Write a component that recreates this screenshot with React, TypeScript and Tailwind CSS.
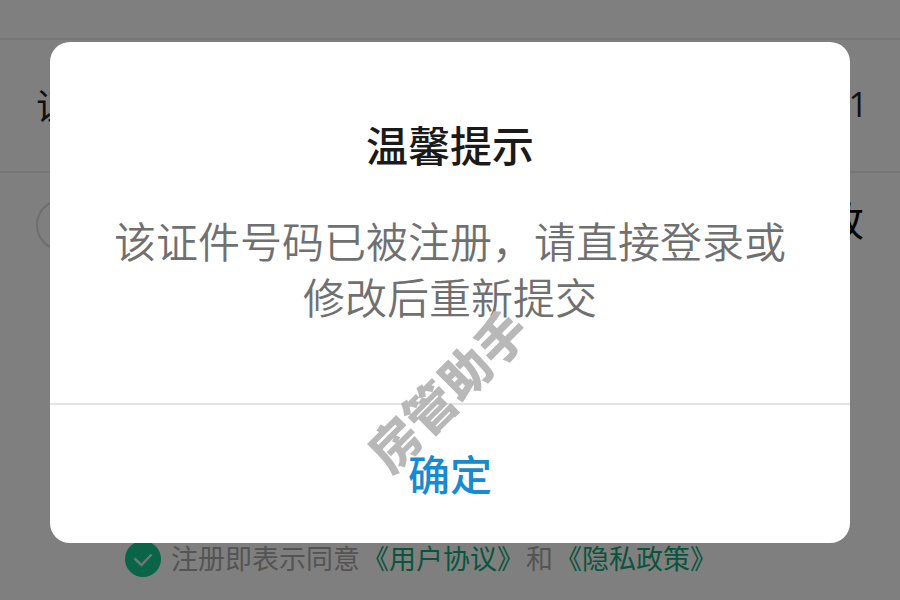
import {useState} from "react";

const cjk = "font-['Noto_Sans_CJK_SC',sans-serif]";

const RegisterForm = () => (
    <div className="flex min-h-screen flex-col bg-white">
        <div className="h-10 border-b-2 border-[#ececec]"/>
        <div className="flex h-[133px] items-center justify-between border-b-2 border-[#ececec] pr-8 pb-1 pl-9 text-[#222]">
            <span className="text-4xl">证</span>
            <span className="font-['Open_Sans',sans-serif] text-[34px] leading-none">51</span>
        </div>
        <div className="flex h-26 items-center justify-between px-9">
            <input
                type="radio"
                aria-label="选择"
                className="size-13 appearance-none rounded-full border-2 border-[#dcdcdc]"
            />
            <button type="button" className="pb-3 text-[40px] leading-none text-black">改</button>
        </div>
        <div className="mt-auto flex items-center gap-2.5 px-[125px] pb-[22px] text-[27px] leading-9 text-[#a8a8a8]">
            <span className="relative size-9 shrink-0">
                <input
                    id="agree"
                    type="checkbox"
                    defaultChecked
                    className="block size-9 appearance-none rounded-full bg-[#14c88e]"
                />
                <svg viewBox="0 0 36 36" className="pointer-events-none absolute inset-0" fill="none">
                    <path d="M9.5 17.5l7 6.5 10-10.5" stroke="#d8efe6" strokeWidth="2.4"/>
                </svg>
            </span>
            <p className="pb-0.5 whitespace-nowrap">
                <label htmlFor="agree">注册即表示同意</label>
                <a href="#terms" className="ml-0.5 text-[#12a87a]">《用户协议》</a>
                <span className="mx-0.5">和</span>
                <a href="#privacy" className="text-[#12a87a]">《隐私政策》</a>
            </p>
        </div>
    </div>
);

const Watermark = () => (
    <div
        aria-hidden="true"
        className="pointer-events-none absolute inset-x-0 top-[320px] pb-3 text-center text-[50px] leading-none font-black text-[#b8b8b8] -rotate-45"
    >
        房管助手
    </div>
);

const TipDialog = ({onConfirm}: {onConfirm: () => void}) => (
    <div className="absolute inset-0 flex items-start bg-black/50 px-[50px] pt-[42px]">
        <div
            role="dialog"
            aria-modal="true"
            aria-labelledby="tip-title"
            className="relative w-full overflow-hidden rounded-[20px] bg-white text-center text-[42px] leading-14"
        >
            <div className="border-b-2 border-[#e4e4e4] px-14 pt-[74px] pb-[79px]">
                <h2 id="tip-title" className="font-medium text-[#1a1a1a]">温馨提示</h2>
                <p className="mt-10 font-[350] text-[#707070]">
                    该证件号码已被注册，请直接登录或修改后重新提交
                </p>
            </div>
            <Watermark/>
            <button
                type="button"
                onClick={onConfirm}
                className="relative block h-[138px] w-full pb-0.5 font-medium text-[#168bd2]"
            >
                确定
            </button>
        </div>
    </div>
);

export default function App() {
    const [open, setOpen] = useState(true);

    return (
        <main lang="zh-CN" className={`relative overflow-hidden ${cjk}`}>
            <RegisterForm/>
            {open && <TipDialog onConfirm={() => setOpen(false)}/>}
        </main>
    );
}
